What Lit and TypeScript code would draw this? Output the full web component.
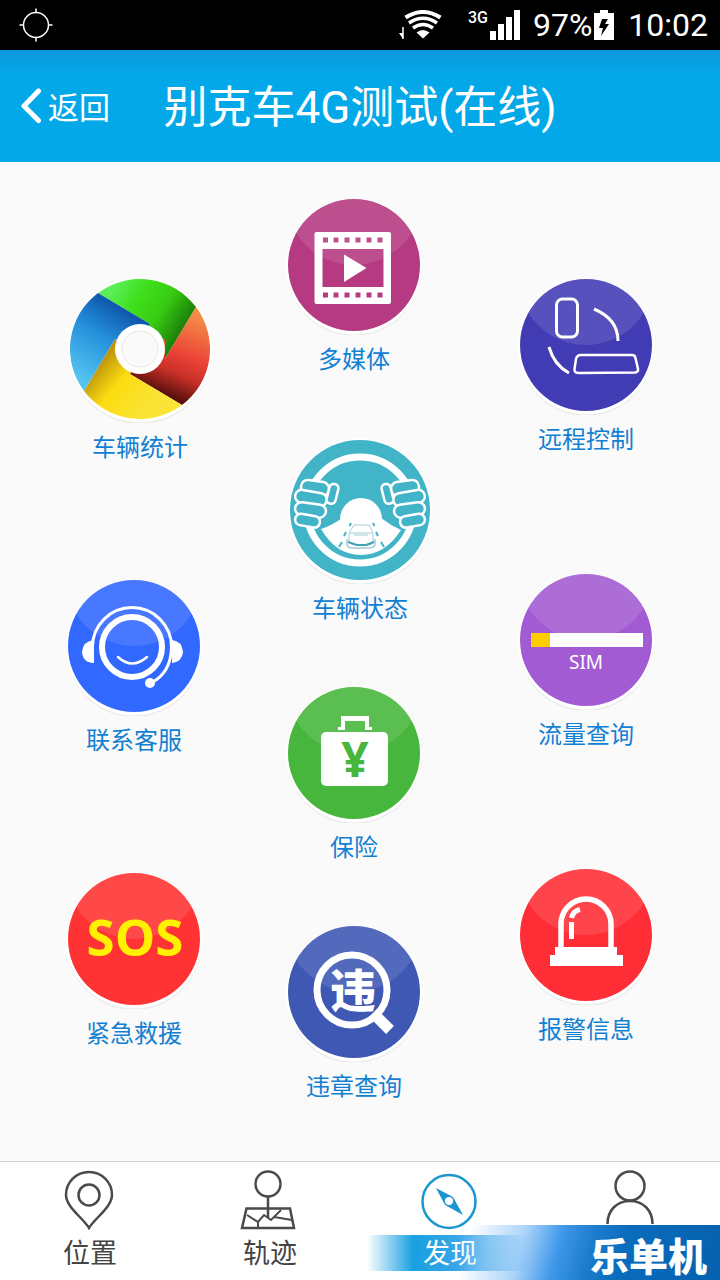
import { LitElement, html, svg, css, SVGTemplateResult } from "lit";
import { customElement, property } from "lit/decorators.js";

type Entry = { label: string; art: SVGTemplateResult; big?: boolean };

/* Round badge with a glossy upper half; the artwork is centred on 0,0. */
const disc = (color: string, content: SVGTemplateResult) => svg`
  <circle cy="4" r="67.5" fill="#000" opacity=".03" />
  <circle cy="3" r="67.5" fill="#000" opacity=".04" />
  <circle cy="1.5" r="68" fill="#fff" />
  <circle r="66" fill=${color} />
  <path d="M-57.7-32A66 66 0 0 1 57.7-32A68 68 0 0 1-57.7-32Z" fill="#fff" opacity=".11" />
  ${content}`;

const bigBase = svg`
  <circle cy="3" r="72" fill="#000" opacity=".04" />
  <circle cy="2" r="72.5" fill="#000" opacity=".03" />
  <circle cy="1" r="72.5" fill="#fff" />`;

const wheel = svg`
  <defs>
    <linearGradient id="g" gradientUnits="userSpaceOnUse" x1="-30" y1="-56" x2="44" y2="-10">
      <stop offset="0" stop-color="#5cee58" /><stop offset=".3" stop-color="#3fe01c" /><stop offset=".6" stop-color="#38cc12" /><stop offset="1" stop-color="#167006" />
    </linearGradient>
    <linearGradient id="r" gradientUnits="userSpaceOnUse" x1="60" y1="-30" x2="28" y2="46">
      <stop offset="0" stop-color="#f58a46" /><stop offset=".5" stop-color="#ea4036" /><stop offset=".72" stop-color="#c83028" /><stop offset="1" stop-color="#5c100c" />
    </linearGradient>
    <linearGradient id="y" gradientUnits="userSpaceOnUse" x1="12" y1="58" x2="-46" y2="10">
      <stop offset="0" stop-color="#fbe436" /><stop offset=".55" stop-color="#fadc10" /><stop offset="1" stop-color="#b0820c" />
    </linearGradient>
    <linearGradient id="b" gradientUnits="userSpaceOnUse" x1="-60" y1="30" x2="-14" y2="-44">
      <stop offset="0" stop-color="#56c4f0" /><stop offset=".55" stop-color="#2490dc" /><stop offset="1" stop-color="#0b4fa4" />
    </linearGradient>
  </defs>
  ${bigBase}
  <path d="M-42-56A70 70 0 0 1 56-42L25 10L0 0L10-25Z" fill="url(#g)" />
  <path d="M56-42A70 70 0 0 1 42 56L-10 25L0 0L25-10V10Z" fill="url(#r)" />
  <path d="M42 56A70 70 0 0 1-56 42L-25-10L0 0L-10 25Z" fill="url(#y)" />
  <path d="M-56 42A70 70 0 0 1-42-56L10-25L0 0L-25-10Z" fill="url(#b)" />
  <circle r="25" fill="#fff" />
  <circle r="18" fill="#fafafa" stroke="#e8e8e8" stroke-width="1" />`;

const hand = svg`
  <rect x="-59" y="-29" width="28" height="14" rx="6.500" transform="rotate(8 -45 -22)" />
  <rect x="-65" y="-18.500" width="32" height="13" rx="6.500" transform="rotate(10 -49 -12)" />
  <rect x="-65" y="-6.500" width="31" height="13" rx="6.500" transform="rotate(8 -49 0)" />
  <rect x="-65" y="5" width="25" height="11.500" rx="5.500" transform="rotate(10 -52 11)" />
  <rect x="-32" y="-26" width="9" height="20" rx="4" transform="rotate(14 -27 -16)" />`;

const steering = svg`
  ${bigBase}
  <circle r="70" fill="#42b4c8" />
  <circle r="53" fill="none" stroke="#fff" stroke-width="7" />
  <circle cx="1" cy="9" r="21" fill="#fff" />
  <path d="M-39 19Q-27 15-18 8H21Q30 15 41 20Q25 45 1 45Q-24 45-39 19Z" fill="#fff" />
  <g fill="none" stroke="#42b4c8" stroke-width="2">
    <path d="M-9 13l-1.500 3M-14 22l-2 4M-18 32l-3 5M13 13l1.500 3M16 22l2 4M21 32l3 5" />
  </g>
  <g fill="none" stroke="#a3ccd6" stroke-width="1">
    <path d="M-6 15H9Q13 21 13 25V31Q13 35 9 35H-6Q-11 34-11 29V25Q-10 20-6 15ZM-10 23H13M-6 25H8" />
    <path d="M-13 29V35Q-12 38-8 38H10Q15 37 15 34V29" stroke-width="1.500" />
    <path d="M-12 32L-3 35H6L14 32" stroke="#42a4b4" stroke-width="2" />
  </g>
  <g fill="#42b4c8" stroke="#fff" stroke-width="2.500">${hand}<g transform="scale(-1 1)">${hand}</g></g>`;

const media = disc("#b53a82", svg`
  <path fill="#fff" fill-rule="evenodd" d="M-37.500-33H35Q37-33 37-31V37Q37 39 35 39H-37.500Q-39.500 39-39.500 37V-31Q-39.500-33-37.500-33Z
    M-31.500-16V22H29.500V-16Z
    M-31-27.500v5h5v-5zM-20.500-27.500v5h5v-5zM-9.500-27.500v5h5v-5zM1.500-27.500v5h5v-5zM12.500-27.500v5h5v-5zM23.500-27.500v5h5v-5z
    M-31 27.500v5h5v-5zM-20.500 27.500v5h5v-5zM-9.500 27.500v5h5v-5zM1.500 27.500v5h5v-5zM12.500 27.500v5h5v-5zM23.500 27.500v5h5v-5z" />
  <path d="M-10-10.500L12.500 3L-10 17Z" fill="#fff" />`);

const remote = disc("#423cb4", svg`
  <g fill="none" stroke="#fff" stroke-width="3">
    <rect x="-29.500" y="-46" width="21" height="38" rx="6" />
    <path d="M8-36Q32-26 32-4" />
    <path d="M-37 2Q-32 20-17 28" />
    <path stroke-width="2.500" d="M-5 10H46Q49 10 49.500 13L52 24Q52.500 27 49 27.500L-7 28Q-12 28-11.500 24L-10 14Q-9 10-5 10Z" />
  </g>`);

const service = disc("#3168ff", svg`
  <g fill="none" stroke="#fff" stroke-linecap="round">
    <circle cx="-2" cy="1" r="30" stroke-width="6" />
    <path d="M-41.500 8V1A39.500 39.500 0 0 1 37.500 1Q37 27 17 37" stroke-width="3" />
    <path d="M-16 11Q-2 24 13 11" stroke-width="2.500" />
  </g>
  <circle cx="16" cy="37" r="5" fill="#fff" />
  <path d="M-40-6V17Q-51 17-52 6Q-51-5-40-6ZM38-6V17Q48 16 49 6Q48-5 38-6Z" fill="#fff" />`);

const sim = disc("#a35bd3", svg`
  <rect x="-55" y="-7" width="112" height="14" fill="#fff" />
  <rect x="-55" y="-7" width="19" height="14" fill="#fc0" />
  <text x="0" y="29" class="sim">SIM</text>`);

const insurance = disc("#46b63c", svg`
  <path d="M-16-23V-26H-13V-37H15V-26H18V-23H11V-32H-9V-23Z" fill="#fff" />
  <rect x="-33" y="-21" width="67" height="54" rx="5" fill="#fff" />
  <text x="1" y="24" class="yen">¥</text>`);

const violation = disc("#3e58b4", svg`
  <path d="M19 21L36 38" stroke="#fff" stroke-width="11" />
  <circle cx="-2" cy="-2" r="35" fill="none" stroke="#fff" stroke-width="7" />
  <text x="-1" y="15" class="wei">违</text>`);

const alarm = disc("#ff2e36", svg`
  <path d="M-25 14V-11A25 25 0 0 1 25-11V14" fill="none" stroke="#fff" stroke-width="5.500" />
  <path d="M-31 12H31V20H37V31H-36V20H-31Z" fill="#fff" />
  <path d="M-14.500 4V-13M-14.500-17Q-13-24-6-25.500" fill="none" stroke="#fff" stroke-width="5" />`);

const sos = disc("#ff3333", svg`<text x="1" y="17" class="sos">SOS</text>`);

const columns: { name: string; entries: Entry[] }[] = [
  { name: "left", entries: [
    { label: "车辆统计", art: wheel, big: true },
    { label: "联系客服", art: service },
    { label: "紧急救援", art: sos },
  ] },
  { name: "middle", entries: [
    { label: "多媒体", art: media },
    { label: "车辆状态", art: steering, big: true },
    { label: "保险", art: insurance },
    { label: "违章查询", art: violation },
  ] },
  { name: "right", entries: [
    { label: "远程控制", art: remote },
    { label: "流量查询", art: sim },
    { label: "报警信息", art: alarm },
  ] },
];

@customElement("status-bar")
class StatusBar extends LitElement {
  static styles = css`
    :host { display: flex; align-items: center; height: 50px; padding: 0 12px 0 18px; background: #000; color: #fff;
      font: 32px/50px Roboto, sans-serif; }
    svg { display: block; flex: none; }
    .space { flex: 1; }
    .net { margin: 0 12px 0 24px; }
    .small { font: 500 16px Roboto, sans-serif; fill: #fff; }
    .battery { margin: 0 14px 0 2px; }
  `;
  render() {
    return html`
      <svg width="36" height="36" viewBox="0 0 36 36" fill="none" stroke="#fff" stroke-width="1.500">
        <circle cx="18" cy="18" r="12.500" /><path d="M18 1.500V6M18 30V34.500M1.500 18H6M30 18H34.500" />
      </svg>
      <span class="space"></span>
      <svg width="44" height="30" viewBox="399 11 44 30" fill="none" stroke="#fff" stroke-width="3.500">
        <path d="M405.500 18.500Q423 7.500 440.500 18.500" stroke-width="4" />
        <path d="M409 24Q423 14.500 437 24M413 29Q423 22 433 29" />
        <path d="M416.500 33.500Q423 28.500 429.500 33.500L423 39.500Z" fill="#fff" stroke="none" />
        <path d="M403 28V40" stroke-width="1.500" /><path d="M399 34H403V40Z" fill="#fff" stroke="none" />
      </svg>
      <svg class="net" width="54" height="34" viewBox="467 8 54 34" fill="#fff">
        <text x="468" y="23" class="small">3G</text>
        <path d="M490 31h6v9h-6zM498 24h6v16h-6zM506 17h6v23h-6zM514 10h6v30h-6z" />
      </svg>
      <span>97%</span>
      <svg class="battery" width="20" height="30" viewBox="0 0 20 30">
        <path d="M6 0H14V3H20V30H0V3H6Z" fill="#fff" /><path d="M8 9H14L11 14H15L7 26L9 18H5Z" fill="#000" />
      </svg>
      <span>10:02</span>`;
  }
}

@customElement("feature-item")
class FeatureItem extends LitElement {
  @property({ attribute: false }) entry!: Entry;
  static styles = css`
    :host { display: block; }
    button { display: flex; flex-direction: column; align-items: center; gap: 9px; margin: 0; padding: 0; border: 0;
      background: none; color: #1280d2; cursor: pointer;
      font: 24px/32px Roboto, "Noto Sans CJK SC", sans-serif; }
    svg { display: block; width: 140px; height: 140px; }
    .big { width: 152px; height: 150px; }
    text { text-anchor: middle; }
    .sim { font: 19px "Noto Sans", sans-serif; fill: #fff; }
    .yen { font: bold 48px "Noto Sans", sans-serif; fill: #46b63c; }
    .wei { font: 900 46px "Noto Sans CJK SC", sans-serif; fill: #fff; }
    .sos { font: bold 51px "Open Sans", sans-serif; fill: #fff100; }
  `;
  render() {
    const { label, art, big } = this.entry;
    return html`<button>
      <svg class=${big ? "big" : ""} viewBox=${big ? "-76 -76 152 150" : "-70 -70 140 140"} aria-hidden="true">${art}</svg>
      <span>${label}</span>
    </button>`;
  }
}

@customElement("tab-bar")
class TabBar extends LitElement {
  static styles = css`
    :host { display: block; position: relative; border-top: 1px solid #cbd2d0; background: #fff; }
    nav { display: grid; grid-template-columns: repeat(4, 1fr); }
    a { display: flex; flex-direction: column; align-items: center; gap: 5px; height: 118px; padding-top: 8px;
      box-sizing: border-box; color: #444; text-decoration: none;
      font: 27px/36px Roboto, "Noto Sans CJK SC", sans-serif; }
    span { padding-top: 2px; line-height: 34px; }
    svg { display: block; width: 60px; height: 60px; fill: none; stroke: #4a4a4a; stroke-width: 2.5px; }
    .active svg { stroke: #1b96cf; }
    .active span { padding: 2px 56px 0; color: #fff;
      background: linear-gradient(90deg, #18a0e000, #18a0e0 28%, #3aa6e8 55%, #64b0ee00 98%); }
    .mark { position: absolute; right: 0; bottom: 0; box-sizing: border-box; padding-right: 13px; width: 260px; height: 55px;
      text-align: right; pointer-events: none; color: #fff; font: 900 39px/58px "Noto Sans CJK SC", sans-serif;
      background: linear-gradient(105deg, #5cacf400 4%, #5cacf480 24%, #3f98ea 38%, #1c7ccc 50%, #0a6cbc 62%, #0561ae); }
  `;
  render() {
    return html`<nav>
        <a href="#location">
          <svg viewBox="0 0 60 60"><path d="M29 58C24 49 6 37 6 25A23 23 0 0 1 52 25C52 37 34 49 29 58Z" /><circle cx="29" cy="25" r="10.500" /></svg>
          <span>位置</span></a>
        <a href="#track">
          <svg viewBox="0 0 60 60"><circle cx="28" cy="14" r="12.500" /><path d="M28 27V48M24 38.500H6.500L2 58H54L50 38.500H32H24" />
            <path d="M7 45L18 52L24 45L31 50L41 40M18 52V58M34 47L52 50" stroke-width="2" /></svg>
          <span>轨迹</span></a>
        <a href="#discover" class="active" aria-current="page">
          <svg viewBox="0 0 60 60"><circle cx="29" cy="31.500" r="26.500" />
            <path d="M16 18L33 27L43 45L25 35Z" fill="#1b96cf" stroke="none" /><circle cx="29" cy="31" r="4" fill="#fff" stroke="none" /></svg>
          <span>发现</span></a>
        <a href="#me" aria-label="我">
          <svg viewBox="0 0 60 60"><circle cx="30" cy="16" r="14.500" /><path d="M7.500 54C7.500 40 17 31 30 31S52.500 40 52.500 54" /></svg></a>
      </nav>
      <div class="mark">乐单机</div>`;
  }
}

@customElement("app-root")
class AppRoot extends LitElement {
  static styles = css`
    :host { display: flex; flex-direction: column; min-height: 100vh; background: #fafafa;
      font-family: Roboto, "Noto Sans CJK SC", sans-serif; }
    header { display: grid; grid-template-columns: 1fr auto 1fr; align-items: center; height: 112px; padding: 0 20px;
      box-sizing: border-box; color: #fff; background: linear-gradient(#0b98dc, #03a8e8 24px); }
    .back { display: flex; align-items: center; gap: 6px; justify-self: start; padding: 0; border: 0; background: none;
      color: #fff; font: 31px/40px "Noto Sans CJK SC", sans-serif; cursor: pointer; }
    h1 { margin: 0; padding-top: 4px; font-size: 44px; line-height: 60px; font-weight: 400; }
    main { flex: 1; display: grid; grid-template-columns: 220fr 232fr 140fr; padding: 0 64px 56px; }
    .col { display: flex; flex-direction: column; align-items: flex-start; }
    .left { padding-top: 111px; gap: 112px; }
    .middle { padding-top: 33px; gap: 58px; }
    .right { padding-top: 113px; gap: 114px; }
  `;
  render() {
    return html`
      <status-bar></status-bar>
      <header>
        <button class="back">
          <svg width="22" height="36" viewBox="0 0 22 36" fill="none" stroke="#fff" stroke-width="5" stroke-linecap="round" stroke-linejoin="round"><path d="M18.500 3L4 18L18.500 32.500" /></svg>
          <span>返回</span>
        </button>
        <h1>别克车4G测试(在线)</h1>
      </header>
      <main>
        ${columns.map((c) => html`<div class="col ${c.name}">
          ${c.entries.map((e) => html`<feature-item .entry=${e}></feature-item>`)}
        </div>`)}
      </main>
      <tab-bar></tab-bar>`;
  }
}
